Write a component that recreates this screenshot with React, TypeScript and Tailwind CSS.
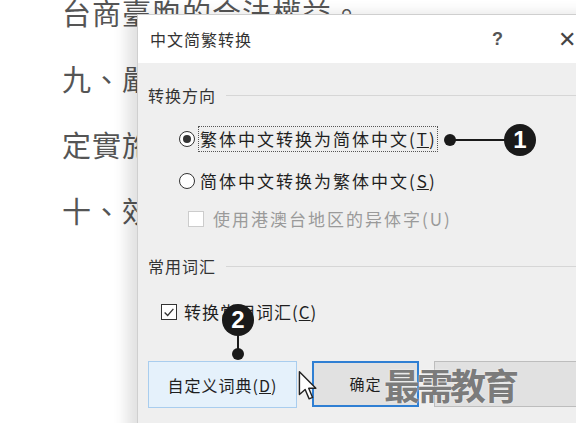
import { FC } from 'react';

const bgLines = ['台商臺胞的合法權益。', '九、嚴格執行', '定實施細則', '十、效能提升'];

const cjk = { fontFamily: '"Noto Sans CJK SC", "Noto Sans", sans-serif' };

const Callout: FC<{ n: string; className: string }> = ({ n, className }) => (
  <div
    className={`absolute flex h-[32px] w-[32px] items-center justify-center rounded-full bg-[#1a1a1a] text-[24px] leading-none font-bold text-white ${className}`}
    style={{ fontFamily: '"Liberation Sans", Arial, sans-serif' }}
  >
    {n}
  </div>
);

export default function App() {
  return (
    <div className="relative h-[423px] w-[576px] overflow-hidden bg-white" style={cjk}>
      {/* document text behind the dialog */}
      <div className="mt-[-21px] pl-[62px] text-[29px] leading-[66px] tracking-[1px] text-[#555]" style={{ fontFamily: '"Noto Sans CJK TC", sans-serif' }}>
        {bgLines.map((line) => (
          <div key={line} className="whitespace-nowrap">
            {line}
          </div>
        ))}
      </div>

      {/* dialog */}
      <div className="absolute top-[14px] left-[137px] h-[430px] w-[470px] border-t border-l border-[#cfcfcf] bg-[#efefef] shadow-[-10px_0_14px_rgba(0,0,0,0.12)]">
        <div className="flex h-[48px] items-center bg-white pl-[12px] text-[16px] tracking-[1px] text-[#333]">
          <span>中文简繁转换</span>
          <span className="ml-auto w-[24px] text-center text-[18px] font-bold text-[#555]" style={{ fontFamily: '"Liberation Sans", sans-serif' }}>?</span>
          <span className="mr-[30px] ml-[48px] text-[22px] font-light text-[#444]" style={{ fontFamily: '"Liberation Sans", sans-serif' }}>✕</span>
        </div>

        <div className="pl-[10px] text-[16px] tracking-[1px] text-[#1f1f1f]">
          <div className="mt-[22px] flex h-[20px] items-center">
            <span className="text-[#333]">转换方向</span>
            <div className="ml-[10px] h-px flex-1 bg-[#d6d6d6]" />
          </div>

          <div className="mt-[21px] flex h-[26px] items-center pl-[31px]">
            <span className="flex h-[16px] w-[16px] items-center justify-center rounded-full border border-[#333] bg-white">
              <span className="h-[8px] w-[8px] rounded-full bg-[#333]" />
            </span>
            <span className="ml-[3px] flex h-[26px] items-center border border-dotted border-[#555] pl-[1px] text-[17px] tracking-[2px]">
              繁体中文转换为简体中文(<span className="underline">T</span>)
            </span>
          </div>

          <div className="mt-[16px] flex h-[26px] items-center pl-[31px]">
            <span className="h-[16px] w-[16px] rounded-full border border-[#333] bg-white" />
            <span className="ml-[5px] text-[17px] tracking-[2px]">
              简体中文转换为繁体中文(<span className="underline">S</span>)
            </span>
          </div>

          <div className="mt-[12px] flex h-[26px] items-center pl-[40px]">
            <span className="h-[16px] w-[16px] border border-[#cccccc] bg-white" />
            <span className="ml-[9px] text-[17px] tracking-[2px] text-[#9a9a9a]">使用港澳台地区的异体字(U)</span>
          </div>

          <div className="mt-[24px] flex h-[20px] items-center">
            <span className="text-[#333]">常用词汇</span>
            <div className="ml-[10px] h-px flex-1 bg-[#d6d6d6]" />
          </div>

          <div className="mt-[23px] flex h-[26px] items-center pl-[13px]">
            <span className="flex h-[16px] w-[16px] items-center justify-center border border-[#333] bg-white">
              <svg viewBox="0 0 16 16" className="h-[14px] w-[14px]">
                <path d="M3 8.5 L6.5 12 L13 4.5" fill="none" stroke="#333" strokeWidth="1.5" />
              </svg>
            </span>
            <span className="ml-[7px] text-[17px] tracking-[1px]">
              转换常用词汇(<span className="underline">C</span>)
            </span>
          </div>

          <div className="mt-[36px] flex items-start gap-[15px]">
            <div className="flex h-[47px] w-[149px] items-center justify-center border border-[#a9cdee] bg-[#e5f1fb] text-[16px] tracking-[1px]">
              自定义词典(<span className="underline">D</span>)
            </div>
            <div className="flex h-[46px] w-[107px] items-center justify-center border-2 border-[#2f7fd3] bg-[#e1e1e1] text-[15px]">
              确定
            </div>
            <div className="h-[46px] w-[160px] border border-[#bdbdbd] bg-[#e1e1e1]" />
          </div>
        </div>
      </div>

      {/* callout 1 */}
      <div className="absolute top-[134px] left-[444px] h-[12px] w-[12px] rounded-full bg-[#1a1a1a]" />
      <div className="absolute top-[139px] left-[450px] h-[2px] w-[56px] bg-[#1a1a1a]" />
      <Callout n="1" className="top-[124px] left-[504px]" />

      {/* callout 2 */}
      <Callout n="2" className="top-[304px] left-[222px]" />
      <div className="absolute top-[334px] left-[237px] h-[18px] w-[2px] bg-[#1a1a1a]" />
      <div className="absolute top-[348px] left-[232px] h-[12px] w-[12px] rounded-full bg-[#1a1a1a]" />

      {/* mouse cursor */}
      <svg viewBox="0 0 14 22" className="absolute top-[370px] left-[298px] h-[32px] w-[20px]">
        <path d="M1 1 L1 17 L5 13.5 L7.8 20 L10.2 19 L7.5 12.6 L12.5 12.6 Z" fill="white" stroke="#222" strokeWidth="1" strokeLinejoin="round" />
      </svg>

      {/* watermark */}
      <div className="absolute top-[358px] left-[384px] text-[36px] leading-[52px] font-bold tracking-[-3px] text-[#7b7b7b] [text-shadow:0_0_2px_rgba(255,255,255,0.8)]" style={{ fontFamily: '"Noto Sans CJK SC", sans-serif' }}>
        最需教育
      </div>
    </div>
  );
}
